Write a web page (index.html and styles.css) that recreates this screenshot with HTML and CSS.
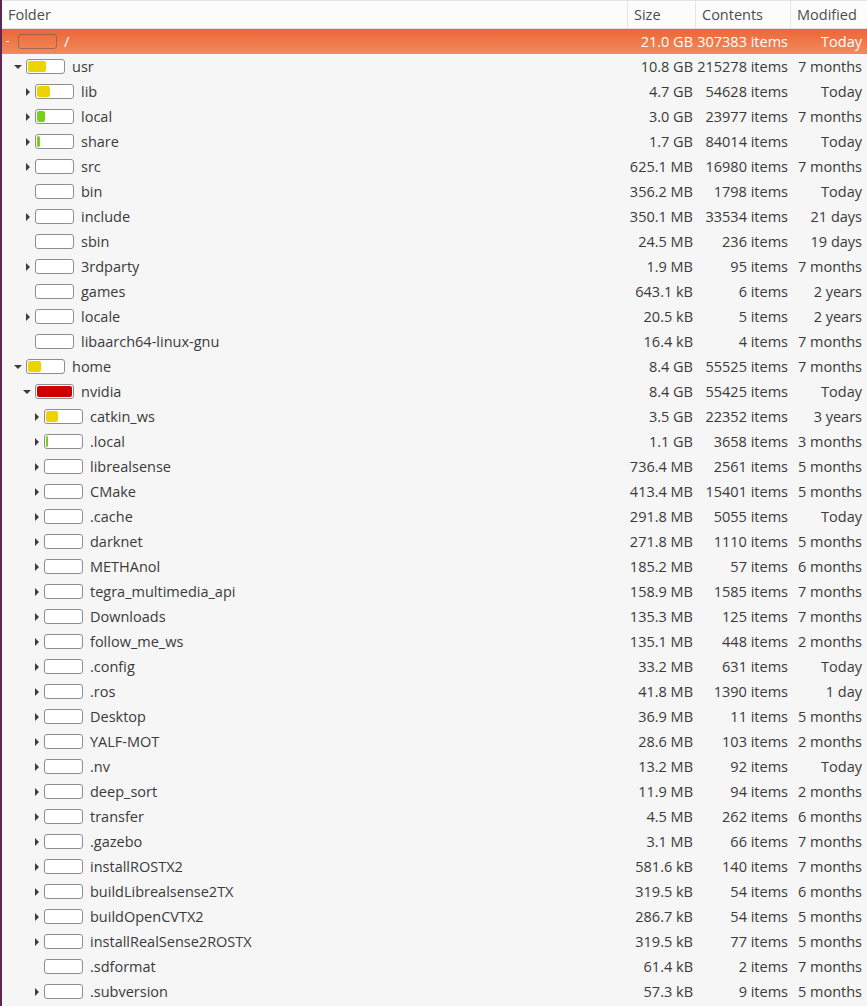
FILE: index.html
```html
<!DOCTYPE html>
<html>
<head>
<meta charset="utf-8">
<link rel="stylesheet" href="styles.css">
</head>
<body>
<div class="window">
  <div class="tree">
    <div class="header">
      <div class="hcell">Folder</div>
      <div class="hcell">Size</div>
      <div class="hcell">Contents</div>
      <div class="hcell last">Modified</div>
    </div>

    <div class="row selected l0"><div class="name"><span class="exp dash"></span><span class="bar root"></span><span class="label">/</span></div><div class="num">21.0 GB</div><div class="num">307383 items</div><div class="num">Today</div></div>
    <div class="row l1"><div class="name"><span class="exp down"></span><span class="bar"><i class="fill y" style="width:18px"></i></span><span class="label">usr</span></div><div class="num">10.8 GB</div><div class="num">215278 items</div><div class="num">7 months</div></div>
    <div class="row l2"><div class="name"><span class="exp right"></span><span class="bar"><i class="fill y" style="width:13px"></i></span><span class="label">lib</span></div><div class="num">4.7 GB</div><div class="num">54628 items</div><div class="num">Today</div></div>
    <div class="row l2"><div class="name"><span class="exp right"></span><span class="bar"><i class="fill g" style="width:8px"></i></span><span class="label">local</span></div><div class="num">3.0 GB</div><div class="num">23977 items</div><div class="num">7 months</div></div>
    <div class="row l2"><div class="name"><span class="exp right"></span><span class="bar"><i class="fill g" style="width:3px"></i></span><span class="label">share</span></div><div class="num">1.7 GB</div><div class="num">84014 items</div><div class="num">Today</div></div>
    <div class="row l2"><div class="name"><span class="exp right"></span><span class="bar"></span><span class="label">src</span></div><div class="num">625.1 MB</div><div class="num">16980 items</div><div class="num">7 months</div></div>
    <div class="row l2"><div class="name"><span class="exp"></span><span class="bar"></span><span class="label">bin</span></div><div class="num">356.2 MB</div><div class="num">1798 items</div><div class="num">Today</div></div>
    <div class="row l2"><div class="name"><span class="exp right"></span><span class="bar"></span><span class="label">include</span></div><div class="num">350.1 MB</div><div class="num">33534 items</div><div class="num">21 days</div></div>
    <div class="row l2"><div class="name"><span class="exp"></span><span class="bar"></span><span class="label">sbin</span></div><div class="num">24.5 MB</div><div class="num">236 items</div><div class="num">19 days</div></div>
    <div class="row l2"><div class="name"><span class="exp right"></span><span class="bar"></span><span class="label">3rdparty</span></div><div class="num">1.9 MB</div><div class="num">95 items</div><div class="num">7 months</div></div>
    <div class="row l2"><div class="name"><span class="exp"></span><span class="bar"></span><span class="label">games</span></div><div class="num">643.1 kB</div><div class="num">6 items</div><div class="num">2 years</div></div>
    <div class="row l2"><div class="name"><span class="exp right"></span><span class="bar"></span><span class="label">locale</span></div><div class="num">20.5 kB</div><div class="num">5 items</div><div class="num">2 years</div></div>
    <div class="row l2"><div class="name"><span class="exp"></span><span class="bar"></span><span class="label">libaarch64-linux-gnu</span></div><div class="num">16.4 kB</div><div class="num">4 items</div><div class="num">7 months</div></div>
    <div class="row l1"><div class="name"><span class="exp down"></span><span class="bar"><i class="fill y" style="width:13px"></i></span><span class="label">home</span></div><div class="num">8.4 GB</div><div class="num">55525 items</div><div class="num">7 months</div></div>
    <div class="row l2"><div class="name"><span class="exp down"></span><span class="bar"><i class="fill r" style="width:35px"></i></span><span class="label">nvidia</span></div><div class="num">8.4 GB</div><div class="num">55425 items</div><div class="num">Today</div></div>
    <div class="row l3"><div class="name"><span class="exp right"></span><span class="bar"><i class="fill y" style="width:12px"></i></span><span class="label">catkin_ws</span></div><div class="num">3.5 GB</div><div class="num">22352 items</div><div class="num">3 years</div></div>
    <div class="row l3"><div class="name"><span class="exp right"></span><span class="bar"><i class="fill g" style="width:2px"></i></span><span class="label">.local</span></div><div class="num">1.1 GB</div><div class="num">3658 items</div><div class="num">3 months</div></div>
    <div class="row l3"><div class="name"><span class="exp right"></span><span class="bar"></span><span class="label">librealsense</span></div><div class="num">736.4 MB</div><div class="num">2561 items</div><div class="num">5 months</div></div>
    <div class="row l3"><div class="name"><span class="exp right"></span><span class="bar"></span><span class="label">CMake</span></div><div class="num">413.4 MB</div><div class="num">15401 items</div><div class="num">5 months</div></div>
    <div class="row l3"><div class="name"><span class="exp right"></span><span class="bar"></span><span class="label">.cache</span></div><div class="num">291.8 MB</div><div class="num">5055 items</div><div class="num">Today</div></div>
    <div class="row l3"><div class="name"><span class="exp right"></span><span class="bar"></span><span class="label">darknet</span></div><div class="num">271.8 MB</div><div class="num">1110 items</div><div class="num">5 months</div></div>
    <div class="row l3"><div class="name"><span class="exp right"></span><span class="bar"></span><span class="label">METHAnol</span></div><div class="num">185.2 MB</div><div class="num">57 items</div><div class="num">6 months</div></div>
    <div class="row l3"><div class="name"><span class="exp right"></span><span class="bar"></span><span class="label">tegra_multimedia_api</span></div><div class="num">158.9 MB</div><div class="num">1585 items</div><div class="num">7 months</div></div>
    <div class="row l3"><div class="name"><span class="exp right"></span><span class="bar"></span><span class="label">Downloads</span></div><div class="num">135.3 MB</div><div class="num">125 items</div><div class="num">7 months</div></div>
    <div class="row l3"><div class="name"><span class="exp right"></span><span class="bar"></span><span class="label">follow_me_ws</span></div><div class="num">135.1 MB</div><div class="num">448 items</div><div class="num">2 months</div></div>
    <div class="row l3"><div class="name"><span class="exp right"></span><span class="bar"></span><span class="label">.config</span></div><div class="num">33.2 MB</div><div class="num">631 items</div><div class="num">Today</div></div>
    <div class="row l3"><div class="name"><span class="exp right"></span><span class="bar"></span><span class="label">.ros</span></div><div class="num">41.8 MB</div><div class="num">1390 items</div><div class="num">1 day</div></div>
    <div class="row l3"><div class="name"><span class="exp right"></span><span class="bar"></span><span class="label">Desktop</span></div><div class="num">36.9 MB</div><div class="num">11 items</div><div class="num">5 months</div></div>
    <div class="row l3"><div class="name"><span class="exp right"></span><span class="bar"></span><span class="label">YALF-MOT</span></div><div class="num">28.6 MB</div><div class="num">103 items</div><div class="num">2 months</div></div>
    <div class="row l3"><div class="name"><span class="exp right"></span><span class="bar"></span><span class="label">.nv</span></div><div class="num">13.2 MB</div><div class="num">92 items</div><div class="num">Today</div></div>
    <div class="row l3"><div class="name"><span class="exp right"></span><span class="bar"></span><span class="label">deep_sort</span></div><div class="num">11.9 MB</div><div class="num">94 items</div><div class="num">2 months</div></div>
    <div class="row l3"><div class="name"><span class="exp right"></span><span class="bar"></span><span class="label">transfer</span></div><div class="num">4.5 MB</div><div class="num">262 items</div><div class="num">6 months</div></div>
    <div class="row l3"><div class="name"><span class="exp right"></span><span class="bar"></span><span class="label">.gazebo</span></div><div class="num">3.1 MB</div><div class="num">66 items</div><div class="num">7 months</div></div>
    <div class="row l3"><div class="name"><span class="exp right"></span><span class="bar"></span><span class="label">installROSTX2</span></div><div class="num">581.6 kB</div><div class="num">140 items</div><div class="num">7 months</div></div>
    <div class="row l3"><div class="name"><span class="exp right"></span><span class="bar"></span><span class="label">buildLibrealsense2TX</span></div><div class="num">319.5 kB</div><div class="num">54 items</div><div class="num">6 months</div></div>
    <div class="row l3"><div class="name"><span class="exp right"></span><span class="bar"></span><span class="label">buildOpenCVTX2</span></div><div class="num">286.7 kB</div><div class="num">54 items</div><div class="num">5 months</div></div>
    <div class="row l3"><div class="name"><span class="exp right"></span><span class="bar"></span><span class="label">installRealSense2ROSTX</span></div><div class="num">319.5 kB</div><div class="num">77 items</div><div class="num">5 months</div></div>
    <div class="row l3"><div class="name"><span class="exp"></span><span class="bar"></span><span class="label">.sdformat</span></div><div class="num">61.4 kB</div><div class="num">2 items</div><div class="num">7 months</div></div>
    <div class="row l3"><div class="name"><span class="exp right"></span><span class="bar"></span><span class="label">.subversion</span></div><div class="num">57.3 kB</div><div class="num">9 items</div><div class="num">5 months</div></div>
  </div>
</div>
</body>
</html>
```
FILE: styles.css
```css
html, body {
  margin: 0;
  padding: 0;
  background: #f6f6f6;
}
body {
  font-family: "Open Sans", "Noto Sans", sans-serif;
  font-size: 14.5px;
  color: #3a3a3a;
}
.window {
  width: 867px;
  height: 1006px;
  overflow: hidden;
  display: flex;
}
.window::before {
  content: "";
  width: 2px;
  flex: none;
  background: #5e2750;
}
.tree {
  flex: 1;
  background: #f6f6f6;
}
.header, .row {
  display: grid;
  grid-template-columns: 626px 68px 95px 74px;
}
.header {
  background: #fcfcfc;
  border-top: 1px solid #e4e4e4;
  border-bottom: 1px solid #e2e2e2;
  box-sizing: content-box;
  height: 27px;
}
.hcell {
  display: flex;
  align-items: center;
  padding-left: 6px;
  border-right: 1px solid #e4e4e4;
  color: #4c4c4c;
}
.hcell.last {
  border-right: none;
}
.row {
  height: 25px;
  align-items: center;
}
.row.selected {
  background: linear-gradient(#eb6637, #f38a5c);
  color: #ffffff;
}
.name {
  display: flex;
  align-items: center;
  height: 25px;
  white-space: nowrap;
}
.l0 .name { padding-left: 0; }
.l1 .name { padding-left: 9px; }
.l2 .name { padding-left: 18px; }
.l3 .name { padding-left: 27px; }
.exp {
  width: 15px;
  flex: none;
  display: flex;
  align-items: center;
  height: 25px;
}
.exp.right::after {
  content: "";
  margin-left: 6px;
  border-left: 4px solid #3c3c3c;
  border-top: 4px solid transparent;
  border-bottom: 4px solid transparent;
}
.exp.down::after {
  content: "";
  margin-left: 3px;
  border-top: 4px solid #3c3c3c;
  border-left: 4px solid transparent;
  border-right: 4px solid transparent;
}
.exp.dash::after {
  content: "";
  margin-left: 4px;
  width: 3px;
  height: 1px;
  background: #ffffff;
}
.bar {
  flex: none;
  box-sizing: border-box;
  width: 39px;
  height: 15px;
  border: 1px solid #8e8e8e;
  border-radius: 3px;
  background: #ffffff;
  padding: 1px;
  display: flex;
}
.bar.root {
  background: transparent;
  border-color: rgba(90, 90, 90, 0.55);
  margin-left: 1px;
}
.fill {
  display: block;
  height: 100%;
  border-radius: 2px;
}
.fill.y { background: #edd400; }
.fill.g { background: #73d216; }
.fill.r { background: #cc0000; }
.label {
  margin-left: 7px;
}
.num {
  text-align: right;
  padding-right: 3px;
  white-space: nowrap;
}
```
